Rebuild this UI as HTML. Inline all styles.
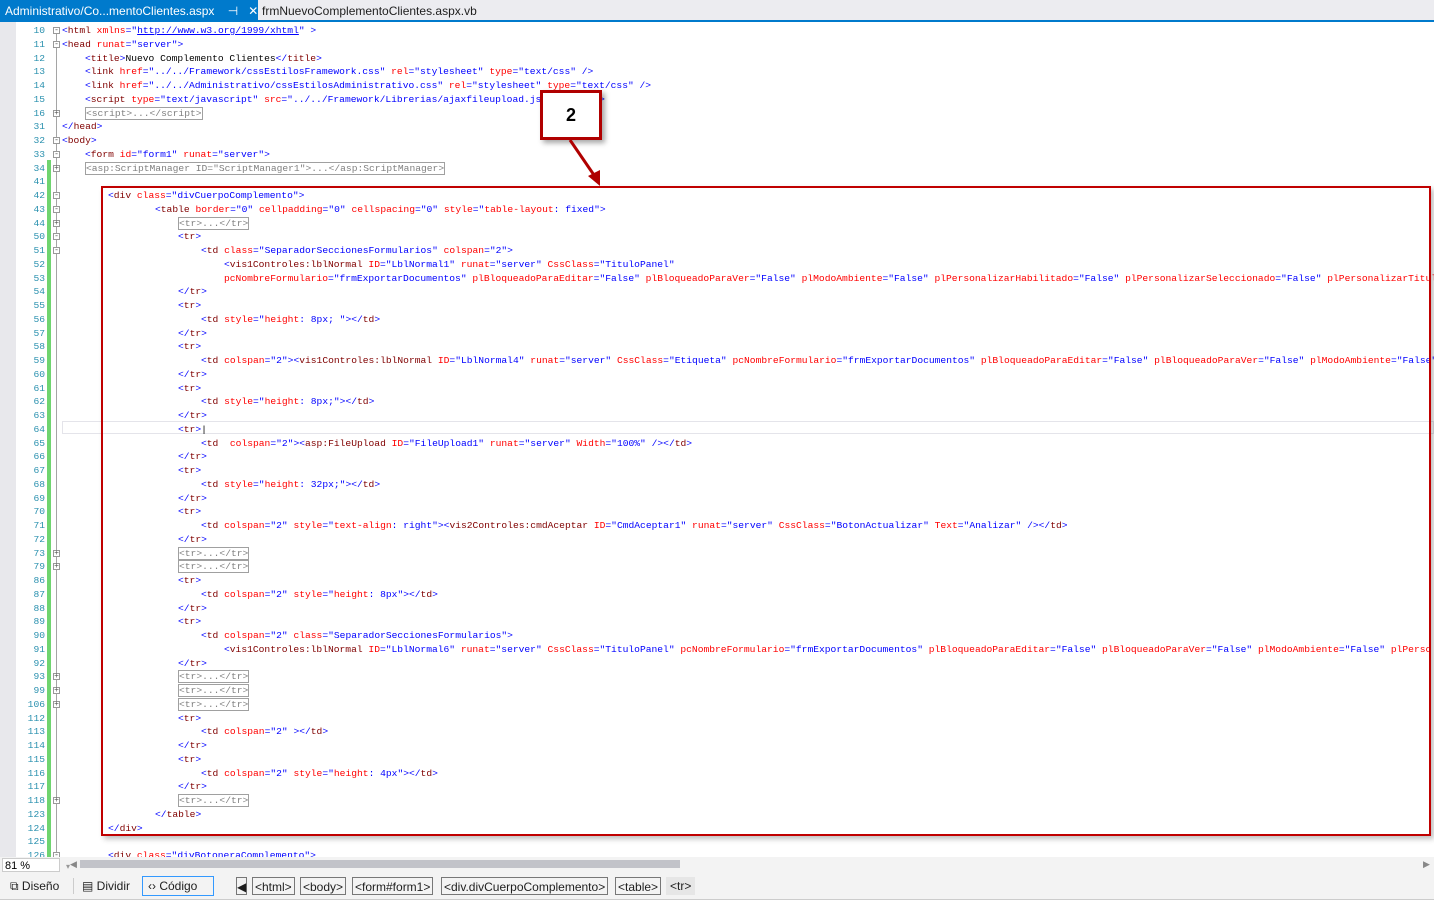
<!DOCTYPE html>
<html><head><meta charset="utf-8"><style>
body{margin:0;width:1434px;height:900px;overflow:hidden;background:#fff;font-family:"Liberation Sans",sans-serif;position:relative}
.tabbar{position:absolute;left:0;top:0;width:1434px;height:20px;background:#ececf0;border-bottom:2px solid #007acc}
.tab1{position:absolute;left:0;top:0;width:258px;height:20px;background:#007acc;color:#fff;font-size:12px;line-height:22px;padding-left:5px;box-sizing:border-box;white-space:nowrap}
.tab2{position:absolute;left:262px;top:0;font-size:12px;line-height:22px;color:#1e1e1e;white-space:nowrap}
.gut{position:absolute;left:0;top:22px;width:16px;height:835px;background:#e8e8ec}
.green{position:absolute;left:47px;top:160px;width:4px;height:697px;background:#6fd46f}
.fold{position:absolute;left:56px;top:30px;width:1px;height:827px;background:#a5a5a5}
.code{position:absolute;left:0;top:22px;width:1434px;height:835px;overflow:hidden;font-family:"Liberation Mono",monospace;font-size:9.65px;line-height:13.75px}
.in{position:absolute;left:0;top:2px;width:1434px}
.l{height:13.75px;position:relative;white-space:pre;color:#00f}
.n{position:absolute;left:16px;width:29px;text-align:right;color:#2b91af}
.x{position:absolute;top:0}
.f{position:absolute;left:53px;top:3px;width:7px;height:7px;border:1px solid #999;background:#fff;box-sizing:border-box;font-size:8px;line-height:5px;text-align:center;color:#555}
i{font-style:normal;color:#f00}
b{font-weight:normal;color:#800000}
s{text-decoration:none;color:#000}
.c{color:#808080;border:1px solid #a0a0a0;line-height:11px;display:inline-block}
.cur{position:absolute;left:62px;top:421px;width:1372px;height:13px;border:1px solid #e4e4ea;box-sizing:border-box}
.red{position:absolute;left:101px;top:186px;width:1330px;height:650px;border:2px solid #c00000;box-sizing:border-box;box-shadow:3px 3px 5px rgba(0,0,0,.25)}
.call{position:absolute;left:540px;top:90px;width:62px;height:50px;border:3px solid #b00000;background:#fff;box-sizing:border-box;box-shadow:3px 3px 5px rgba(0,0,0,.35);font:bold 18px "Liberation Sans",sans-serif;text-align:center;line-height:44px;color:#000}
.sb{position:absolute;left:0;top:857px;width:1434px;height:16px;background:#f3f3f3}
.bb{position:absolute;left:0;top:873px;width:1434px;height:27px;background:#f3f3f3;border-bottom:1px solid #ccc;box-sizing:border-box;font-size:12px;color:#1e1e1e}
.bb span{position:absolute;top:4px;line-height:18px;white-space:nowrap}
.crumb{border:1px solid #777;padding:0 2px;height:18px;box-sizing:border-box;line-height:16px}
</style></head><body>
<div class="tabbar"><div class="tab1">Administrativo/Co...mentoClientes.aspx&nbsp;&nbsp;&nbsp;&nbsp;⊣&nbsp;&nbsp; ✕</div><div class="tab2">frmNuevoComplementoClientes.aspx.vb</div></div>
<div class="gut"></div><div class="green"></div><div class="fold"></div>
<div class="cur"></div>
<div class="code"><div class="in">
<div class="l"><span class="n">10</span><span class="f">-</span><span class="x" style="left:62px">&lt;<b>html</b> <i>xmlns</i>="<span style="text-decoration:underline">http://www.w3.org/1999/xhtml</span>" &gt;</span></div>
<div class="l"><span class="n">11</span><span class="f">-</span><span class="x" style="left:62px">&lt;<b>head</b> <i>runat</i>="server"&gt;</span></div>
<div class="l"><span class="n">12</span><span class="x" style="left:85px">&lt;<b>title</b>&gt;<s>Nuevo Complemento Clientes</s>&lt;/<b>title</b>&gt;</span></div>
<div class="l"><span class="n">13</span><span class="x" style="left:85px">&lt;<b>link</b> <i>href</i>="../../Framework/cssEstilosFramework.css" <i>rel</i>="stylesheet" <i>type</i>="text/css" /&gt;</span></div>
<div class="l"><span class="n">14</span><span class="x" style="left:85px">&lt;<b>link</b> <i>href</i>="../../Administrativo/cssEstilosAdministrativo.css" <i>rel</i>="stylesheet" <i>type</i>="text/css" /&gt;</span></div>
<div class="l"><span class="n">15</span><span class="x" style="left:85px">&lt;<b>script</b> <i>type</i>="text/javascript" <i>src</i>="../../Framework/Librerias/ajaxfileupload.js"&gt;&lt;/<b>script</b>&gt;</span></div>
<div class="l"><span class="n">16</span><span class="f">+</span><span class="x" style="left:85px"><span class="c">&lt;script&gt;...&lt;/script&gt;</span></span></div>
<div class="l"><span class="n">31</span><span class="x" style="left:62px">&lt;/<b>head</b>&gt;</span></div>
<div class="l"><span class="n">32</span><span class="f">-</span><span class="x" style="left:62px">&lt;<b>body</b>&gt;</span></div>
<div class="l"><span class="n">33</span><span class="f">-</span><span class="x" style="left:85px">&lt;<b>form</b> <i>id</i>="form1" <i>runat</i>="server"&gt;</span></div>
<div class="l"><span class="n">34</span><span class="f">+</span><span class="x" style="left:85px"><span class="c">&lt;asp:ScriptManager ID="ScriptManager1"&gt;...&lt;/asp:ScriptManager&gt;</span></span></div>
<div class="l"><span class="n">41</span></div>
<div class="l"><span class="n">42</span><span class="f">-</span><span class="x" style="left:108px">&lt;<b>div</b> <i>class</i>="divCuerpoComplemento"&gt;</span></div>
<div class="l"><span class="n">43</span><span class="f">-</span><span class="x" style="left:155px">&lt;<b>table</b> <i>border</i>="0" <i>cellpadding</i>="0" <i>cellspacing</i>="0" <i>style</i>="<i>table-layout</i>: fixed"&gt;</span></div>
<div class="l"><span class="n">44</span><span class="f">+</span><span class="x" style="left:178px"><span class="c">&lt;tr&gt;...&lt;/tr&gt;</span></span></div>
<div class="l"><span class="n">50</span><span class="f">-</span><span class="x" style="left:178px">&lt;<b>tr</b>&gt;</span></div>
<div class="l"><span class="n">51</span><span class="f">-</span><span class="x" style="left:201px">&lt;<b>td</b> <i>class</i>="SeparadorSeccionesFormularios" <i>colspan</i>="2"&gt;</span></div>
<div class="l"><span class="n">52</span><span class="x" style="left:224px">&lt;<b>vis1Controles:lblNormal</b> <i>ID</i>="LblNormal1" <i>runat</i>="server" <i>CssClass</i>="TituloPanel"</span></div>
<div class="l"><span class="n">53</span><span class="x" style="left:224px"><i>pcNombreFormulario</i>="frmExportarDocumentos" <i>plBloqueadoParaEditar</i>="False" <i>plBloqueadoParaVer</i>="False" <i>plModoAmbiente</i>="False" <i>plPersonalizarHabilitado</i>="False" <i>plPersonalizarSeleccionado</i>="False" <i>plPersonalizarTitulo</i></span></div>
<div class="l"><span class="n">54</span><span class="x" style="left:178px">&lt;/<b>tr</b>&gt;</span></div>
<div class="l"><span class="n">55</span><span class="x" style="left:178px">&lt;<b>tr</b>&gt;</span></div>
<div class="l"><span class="n">56</span><span class="x" style="left:201px">&lt;<b>td</b> <i>style</i>="<i>height</i>: 8px; "&gt;&lt;/<b>td</b>&gt;</span></div>
<div class="l"><span class="n">57</span><span class="x" style="left:178px">&lt;/<b>tr</b>&gt;</span></div>
<div class="l"><span class="n">58</span><span class="x" style="left:178px">&lt;<b>tr</b>&gt;</span></div>
<div class="l"><span class="n">59</span><span class="x" style="left:201px">&lt;<b>td</b> <i>colspan</i>="2"&gt;&lt;<b>vis1Controles:lblNormal</b> <i>ID</i>="LblNormal4" <i>runat</i>="server" <i>CssClass</i>="Etiqueta" <i>pcNombreFormulario</i>="frmExportarDocumentos" <i>plBloqueadoParaEditar</i>="False" <i>plBloqueadoParaVer</i>="False" <i>plModoAmbiente</i>="False"</span></div>
<div class="l"><span class="n">60</span><span class="x" style="left:178px">&lt;/<b>tr</b>&gt;</span></div>
<div class="l"><span class="n">61</span><span class="x" style="left:178px">&lt;<b>tr</b>&gt;</span></div>
<div class="l"><span class="n">62</span><span class="x" style="left:201px">&lt;<b>td</b> <i>style</i>="<i>height</i>: 8px;"&gt;&lt;/<b>td</b>&gt;</span></div>
<div class="l"><span class="n">63</span><span class="x" style="left:178px">&lt;/<b>tr</b>&gt;</span></div>
<div class="l"><span class="n">64</span><span class="x" style="left:178px">&lt;<b>tr</b>&gt;<s>|</s></span></div>
<div class="l"><span class="n">65</span><span class="x" style="left:201px">&lt;<b>td</b>  <i>colspan</i>="2"&gt;&lt;<b>asp:FileUpload</b> <i>ID</i>="FileUpload1" <i>runat</i>="server" <i>Width</i>="100%" /&gt;&lt;/<b>td</b>&gt;</span></div>
<div class="l"><span class="n">66</span><span class="x" style="left:178px">&lt;/<b>tr</b>&gt;</span></div>
<div class="l"><span class="n">67</span><span class="x" style="left:178px">&lt;<b>tr</b>&gt;</span></div>
<div class="l"><span class="n">68</span><span class="x" style="left:201px">&lt;<b>td</b> <i>style</i>="<i>height</i>: 32px;"&gt;&lt;/<b>td</b>&gt;</span></div>
<div class="l"><span class="n">69</span><span class="x" style="left:178px">&lt;/<b>tr</b>&gt;</span></div>
<div class="l"><span class="n">70</span><span class="x" style="left:178px">&lt;<b>tr</b>&gt;</span></div>
<div class="l"><span class="n">71</span><span class="x" style="left:201px">&lt;<b>td</b> <i>colspan</i>="2" <i>style</i>="<i>text-align</i>: right"&gt;&lt;<b>vis2Controles:cmdAceptar</b> <i>ID</i>="CmdAceptar1" <i>runat</i>="server" <i>CssClass</i>="BotonActualizar" <i>Text</i>="Analizar" /&gt;&lt;/<b>td</b>&gt;</span></div>
<div class="l"><span class="n">72</span><span class="x" style="left:178px">&lt;/<b>tr</b>&gt;</span></div>
<div class="l"><span class="n">73</span><span class="f">+</span><span class="x" style="left:178px"><span class="c">&lt;tr&gt;...&lt;/tr&gt;</span></span></div>
<div class="l"><span class="n">79</span><span class="f">+</span><span class="x" style="left:178px"><span class="c">&lt;tr&gt;...&lt;/tr&gt;</span></span></div>
<div class="l"><span class="n">86</span><span class="x" style="left:178px">&lt;<b>tr</b>&gt;</span></div>
<div class="l"><span class="n">87</span><span class="x" style="left:201px">&lt;<b>td</b> <i>colspan</i>="2" <i>style</i>="<i>height</i>: 8px"&gt;&lt;/<b>td</b>&gt;</span></div>
<div class="l"><span class="n">88</span><span class="x" style="left:178px">&lt;/<b>tr</b>&gt;</span></div>
<div class="l"><span class="n">89</span><span class="x" style="left:178px">&lt;<b>tr</b>&gt;</span></div>
<div class="l"><span class="n">90</span><span class="x" style="left:201px">&lt;<b>td</b> <i>colspan</i>="2" <i>class</i>="SeparadorSeccionesFormularios"&gt;</span></div>
<div class="l"><span class="n">91</span><span class="x" style="left:224px">&lt;<b>vis1Controles:lblNormal</b> <i>ID</i>="LblNormal6" <i>runat</i>="server" <i>CssClass</i>="TituloPanel" <i>pcNombreFormulario</i>="frmExportarDocumentos" <i>plBloqueadoParaEditar</i>="False" <i>plBloqueadoParaVer</i>="False" <i>plModoAmbiente</i>="False" <i>plPerso</i></span></div>
<div class="l"><span class="n">92</span><span class="x" style="left:178px">&lt;/<b>tr</b>&gt;</span></div>
<div class="l"><span class="n">93</span><span class="f">+</span><span class="x" style="left:178px"><span class="c">&lt;tr&gt;...&lt;/tr&gt;</span></span></div>
<div class="l"><span class="n">99</span><span class="f">+</span><span class="x" style="left:178px"><span class="c">&lt;tr&gt;...&lt;/tr&gt;</span></span></div>
<div class="l"><span class="n">106</span><span class="f">+</span><span class="x" style="left:178px"><span class="c">&lt;tr&gt;...&lt;/tr&gt;</span></span></div>
<div class="l"><span class="n">112</span><span class="x" style="left:178px">&lt;<b>tr</b>&gt;</span></div>
<div class="l"><span class="n">113</span><span class="x" style="left:201px">&lt;<b>td</b> <i>colspan</i>="2" &gt;&lt;/<b>td</b>&gt;</span></div>
<div class="l"><span class="n">114</span><span class="x" style="left:178px">&lt;/<b>tr</b>&gt;</span></div>
<div class="l"><span class="n">115</span><span class="x" style="left:178px">&lt;<b>tr</b>&gt;</span></div>
<div class="l"><span class="n">116</span><span class="x" style="left:201px">&lt;<b>td</b> <i>colspan</i>="2" <i>style</i>="<i>height</i>: 4px"&gt;&lt;/<b>td</b>&gt;</span></div>
<div class="l"><span class="n">117</span><span class="x" style="left:178px">&lt;/<b>tr</b>&gt;</span></div>
<div class="l"><span class="n">118</span><span class="f">+</span><span class="x" style="left:178px"><span class="c">&lt;tr&gt;...&lt;/tr&gt;</span></span></div>
<div class="l"><span class="n">123</span><span class="x" style="left:155px">&lt;/<b>table</b>&gt;</span></div>
<div class="l"><span class="n">124</span><span class="x" style="left:108px">&lt;/<b>div</b>&gt;</span></div>
<div class="l"><span class="n">125</span></div>
<div class="l"><span class="n">126</span><span class="f">-</span><span class="x" style="left:108px">&lt;<b>div</b> <i>class</i>="divBotoneraComplemento"&gt;</span></div>
</div></div>
<div class="red"></div>
<div class="call">2</div>
<svg style="position:absolute;left:560px;top:138px" width="50" height="52"><line x1="10" y1="2" x2="36" y2="40" stroke="#b00000" stroke-width="3"/><polygon points="40,48 28,38 40,32" fill="#b00000"/></svg>
<div class="sb"><div style="position:absolute;left:2px;top:1px;width:58px;height:14px;background:#fff;border:1px solid #ccc;font-size:11px;line-height:14px;padding-left:2px;box-sizing:border-box">81 %</div><div style="position:absolute;left:66px;top:5px;font-size:8px;color:#999">▾</div><div style="position:absolute;left:70px;top:2px;font-size:9px;color:#888">◀</div><div style="position:absolute;left:80px;top:3px;width:600px;height:8px;background:#c2c3c9"></div><div style="position:absolute;left:1423px;top:2px;font-size:9px;color:#888">▶</div></div>
<div class="bb">
<span style="left:10px">⧉ Diseño</span>
<span style="left:73px;top:5px;height:16px;border-left:1px solid #ccc"></span>
<span style="left:82px">▤ Dividir</span>
<span style="left:142px;top:3px;width:72px;height:20px;border:1px solid #3399ff;box-sizing:border-box;padding-left:5px;line-height:18px">‹› Código</span>
<span class="crumb" style="left:236px;width:11px;padding:0">◀</span>
<span class="crumb" style="left:252px">&lt;html&gt;</span>
<span class="crumb" style="left:300px">&lt;body&gt;</span>
<span class="crumb" style="left:352px">&lt;form#form1&gt;</span>
<span class="crumb" style="left:441px">&lt;div.divCuerpoComplemento&gt;</span>
<span class="crumb" style="left:615px">&lt;table&gt;</span>
<span style="left:666px;background:#e6e6e6;padding:0 4px">&lt;tr&gt;</span>
</div>
</body></html>
